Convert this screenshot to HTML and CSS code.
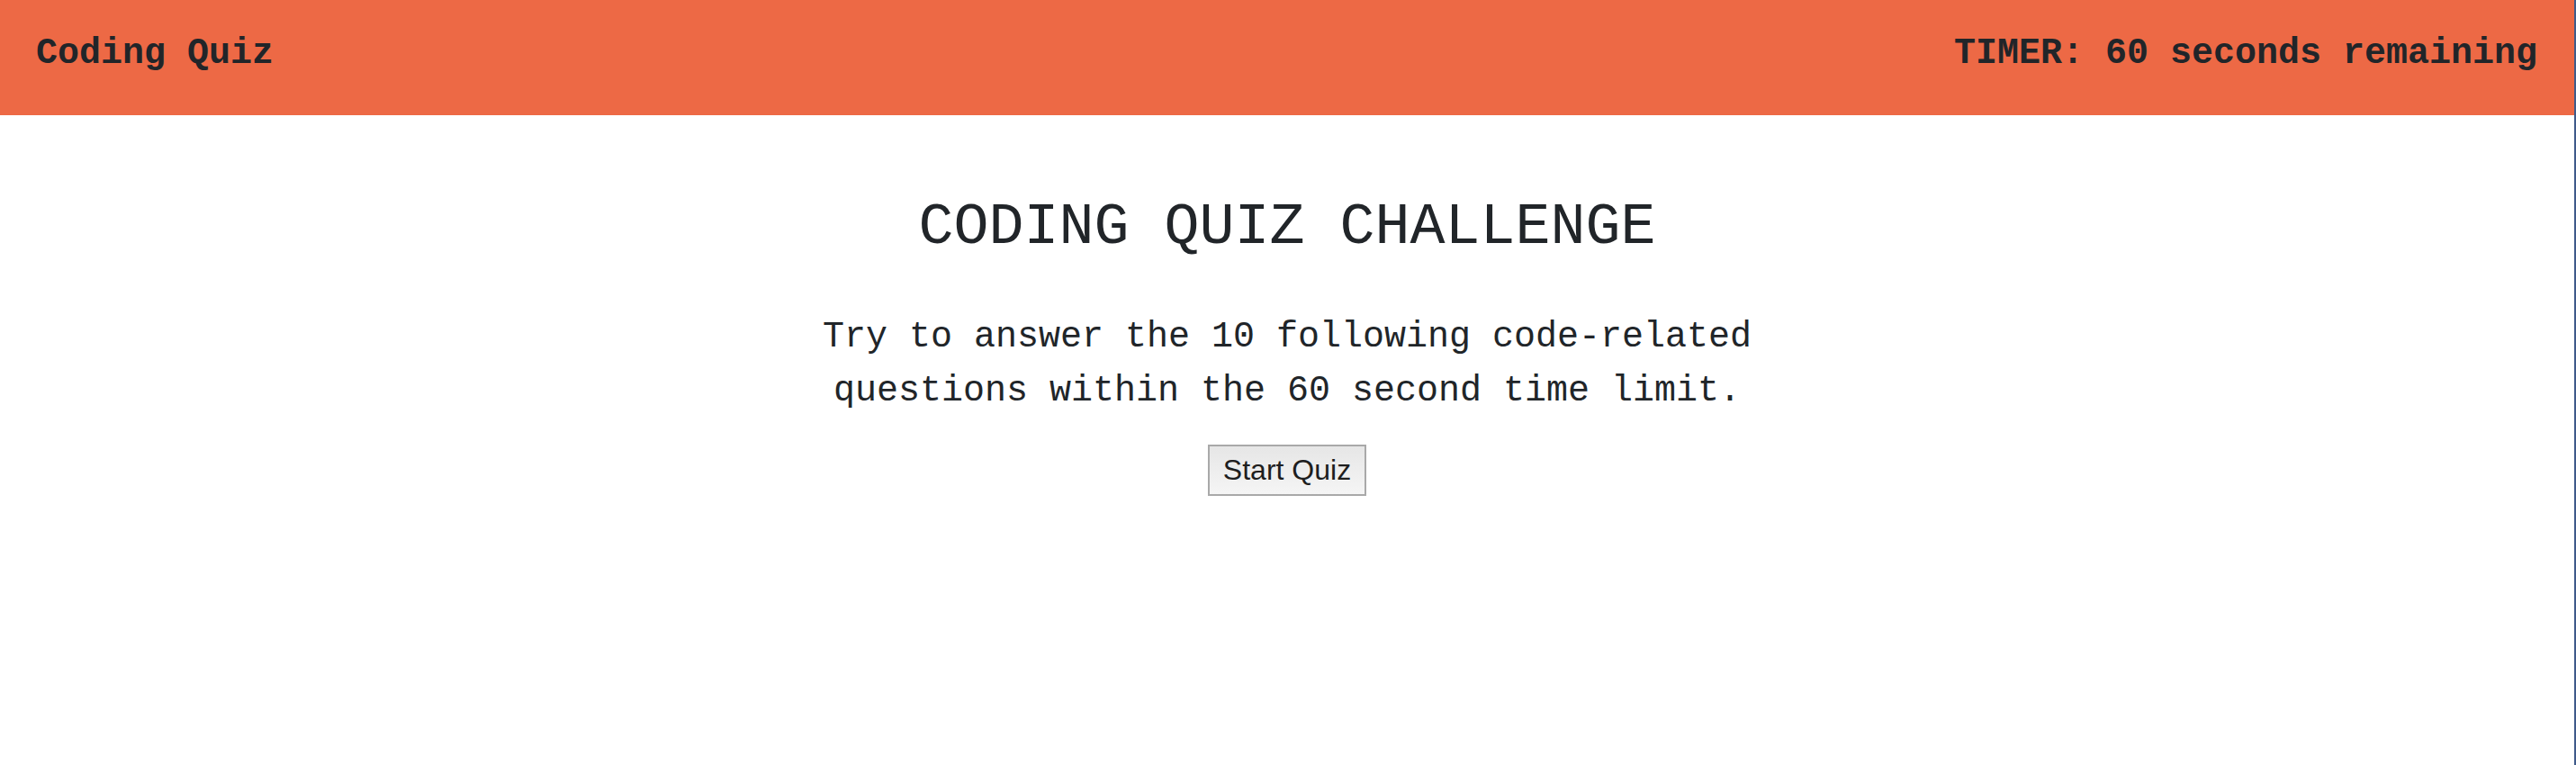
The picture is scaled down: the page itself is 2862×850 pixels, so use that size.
FILE: index.html
```html
<!DOCTYPE html>
<html lang="en">
<head>
<meta charset="utf-8">
<title>Coding Quiz</title>
<link rel="stylesheet" href="styles.css">
</head>
<body>
<div class="frame">
  <header class="topbar">
    <div class="brand">Coding Quiz</div>
    <div class="timer">TIMER: 60 seconds remaining</div>
  </header>
  <main class="intro">
    <h1 class="title">CODING QUIZ CHALLENGE</h1>
    <p class="lead">Try to answer the 10 following code-related questions within the 60 second time limit.</p>
    <button class="start" type="button">Start Quiz</button>
  </main>
</div>
</body>
</html>
```

FILE: styles.css
```css
html, body {
  margin: 0;
  padding: 0;
  height: 100%;
  background: #ffffff;
}
body {
  font-family: "Liberation Mono", "Courier New", monospace;
  color: #212529;
}
.frame {
  min-height: 100%;
  box-sizing: border-box;
  border-right: 2px solid #3f5a8a;
}
.topbar {
  height: 128px;
  background: #ed6945;
  display: flex;
  align-items: center;
  justify-content: space-between;
  padding: 0 41px 10px 40px;
  box-sizing: border-box;
  font-weight: bold;
  font-size: 40px;
}
.intro {
  display: flex;
  flex-direction: column;
  align-items: center;
  text-align: center;
}
.title {
  font-weight: normal;
  font-size: 65px;
  line-height: 76px;
  margin: 87px 0 0;
}
.lead {
  font-size: 40px;
  line-height: 60px;
  max-width: 1100px;
  margin: 54px 0 0;
}
.start {
  margin-top: 29px;
  width: 176px;
  height: 57px;
  border: 2px solid #a9a9a9;
  background: linear-gradient(#e6e6e6, #f5f5f5);
  font-family: "Liberation Sans", Arial, sans-serif;
  font-size: 32px;
  color: #1e1e1e;
  padding: 0;
}
```
